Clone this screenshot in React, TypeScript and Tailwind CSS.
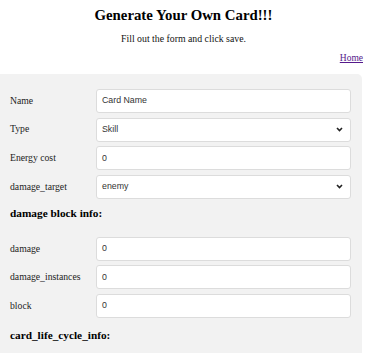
export default function App() {
  const rows1 = [
    { label: "Name", value: "Card Name", select: false },
    { label: "Type", value: "Skill", select: true },
    { label: "Energy cost", value: "0", select: false },
    { label: "damage_target", value: "enemy", select: true },
  ];
  const rows2 = [
    { label: "damage", value: "0" },
    { label: "damage_instances", value: "0" },
    { label: "block", value: "0" },
  ];

  const Field = ({ label, value, select }: { label: string; value: string; select?: boolean }) => (
    <div className="flex items-center h-[24px] mb-[4.6px]">
      <div className="w-[86px] text-[9.7px] text-[#222]">{label}</div>
      <div className="flex-1 h-[24px] bg-white border border-[#dcdcdc] rounded-[3px] flex items-center justify-between pl-[5px] pr-[7px] text-[8.8px] text-[#333] [font-family:'Liberation_Sans',Arial,sans-serif]">
        <span>{value}</span>
        {select && (
          <svg width="7" height="5" viewBox="0 0 7 5">
            <path d="M1 1 L3.5 3.5 L6 1" stroke="#222" strokeWidth="1.6" fill="none" />
          </svg>
        )}
      </div>
    </div>
  );

  return (
    <div className="w-[367px] h-[353px] bg-white overflow-hidden [font-family:'Liberation_Serif','Times_New_Roman',serif]">
      <h1 className="text-center font-bold text-[14.8px] pt-[5px] leading-[20px] text-black">
        Generate Your Own Card!!!
      </h1>
      <p className="text-center text-[9.8px] mt-[7px] leading-[14px] text-[#111]">
        Fill out the form and click save.
      </p>
      <div className="flex justify-end pr-[4px] mt-[6px]">
        <a href="#" className="text-[9.5px] text-[#551a8b] underline leading-[12px]">
          Home
        </a>
      </div>
      <div className="mt-[10px] w-[362px] bg-[#f2f2f2] rounded-tr-[5px] pt-[15px] pl-[10px] pr-[11px] pb-4">
        {rows1.map((r) => (
          <Field key={r.label} label={r.label} value={r.value} select={r.select} />
        ))}
        <h3 className="font-bold text-[11.3px] leading-[16px] mt-[6px] mb-[16px]">damage block info:</h3>
        {rows2.map((r) => (
          <Field key={r.label} label={r.label} value={r.value} />
        ))}
        <h3 className="font-bold text-[11.3px] leading-[16px] mt-[9px]">card_life_cycle_info:</h3>
      </div>
    </div>
  );
}
